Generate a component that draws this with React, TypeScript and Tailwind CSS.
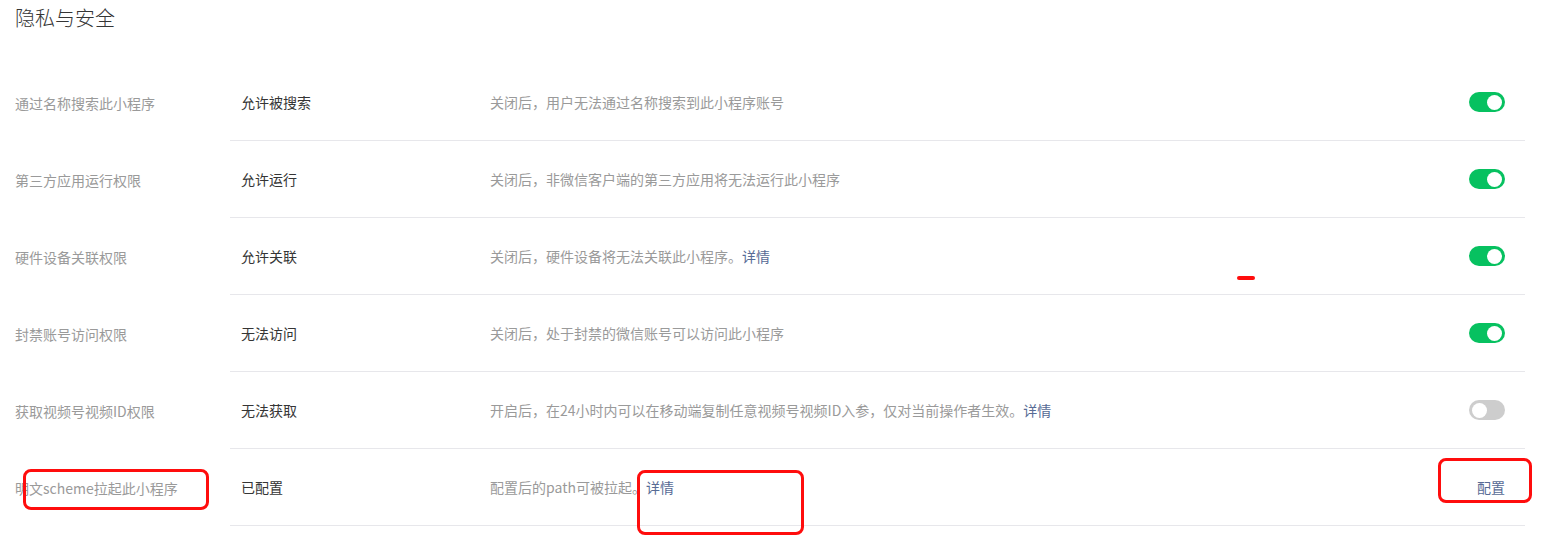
import React from "react";

type Row = {
  label: string;
  value: string;
  desc: string;
  link?: boolean;
  action: "on" | "off" | "config";
};

const rows: Row[] = [
  { label: "通过名称搜索此小程序", value: "允许被搜索", desc: "关闭后，用户无法通过名称搜索到此小程序账号", action: "on" },
  { label: "第三方应用运行权限", value: "允许运行", desc: "关闭后，非微信客户端的第三方应用将无法运行此小程序", action: "on" },
  { label: "硬件设备关联权限", value: "允许关联", desc: "关闭后，硬件设备将无法关联此小程序。", link: true, action: "on" },
  { label: "封禁账号访问权限", value: "无法访问", desc: "关闭后，处于封禁的微信账号可以访问此小程序", action: "on" },
  { label: "获取视频号视频ID权限", value: "无法获取", desc: "开启后，在24小时内可以在移动端复制任意视频号视频ID入参，仅对当前操作者生效。", link: true, action: "off" },
  { label: "明文scheme拉起此小程序", value: "已配置", desc: "配置后的path可被拉起。", link: true, action: "config" },
];

function Toggle({ on }: { on: boolean }) {
  return (
    <div
      className={
        on
          ? "w-[36px] h-[20px] rounded-full bg-[#07c160] flex items-center justify-end px-[3px]"
          : "w-[36px] h-[20px] rounded-full bg-[#cdcdcd] flex items-center justify-start px-[3px]"
      }
    >
      <div className="w-[15px] h-[15px] rounded-full bg-white" />
    </div>
  );
}

export default function App() {
  return (
    <div
      className="relative w-[1553px] h-[545px] bg-white overflow-hidden text-[14px]"
      style={{ fontFamily: '"Noto Sans CJK SC", "Noto Sans", sans-serif' }}
    >
      <div className="pl-[15px] pr-[28px]">
        <h1 className="text-[20px] leading-[36px] pt-0 text-[#353535] font-light">隐私与安全</h1>
        <div className="mt-[28px]">
          {rows.map((r, i) => (
            <div key={i} className="flex items-center h-[77px]">
              <div className="w-[215px] shrink-0 text-[#9a9a9a] leading-[20px]">{r.label}</div>
              <div className="flex-1 flex items-center h-full border-b border-[#e7e7eb]">
                <div className="w-[260px] shrink-0 pl-[11px] text-[#353535] leading-[20px]">{r.value}</div>
                <div className="flex-1 text-[#9a9a9a] leading-[20px]">
                  {r.desc}
                  {r.link && <span className="text-[#576b95]">详情</span>}
                </div>
                <div className="pr-[20px] flex justify-end">
                  {r.action === "config" ? (
                    <span className="text-[#576b95] leading-[20px]">配置</span>
                  ) : (
                    <Toggle on={r.action === "on"} />
                  )}
                </div>
              </div>
            </div>
          ))}
        </div>
      </div>

      {/* red annotations */}
      <div className="absolute left-[23px] top-[469px] w-[186px] h-[41px] border-[3px] border-[#ff0d0d] rounded-[8px]" />
      <div className="absolute left-[637px] top-[470px] w-[167px] h-[65px] border-[3px] border-[#ff0d0d] rounded-[8px]" />
      <div className="absolute left-[1438px] top-[458px] w-[94px] h-[45px] border-[3px] border-[#ff0d0d] rounded-[8px]" />
      <div className="absolute left-[1237px] top-[276px] w-[18px] h-[4px] bg-[#ff0d0d] rounded-full" />
    </div>
  );
}
